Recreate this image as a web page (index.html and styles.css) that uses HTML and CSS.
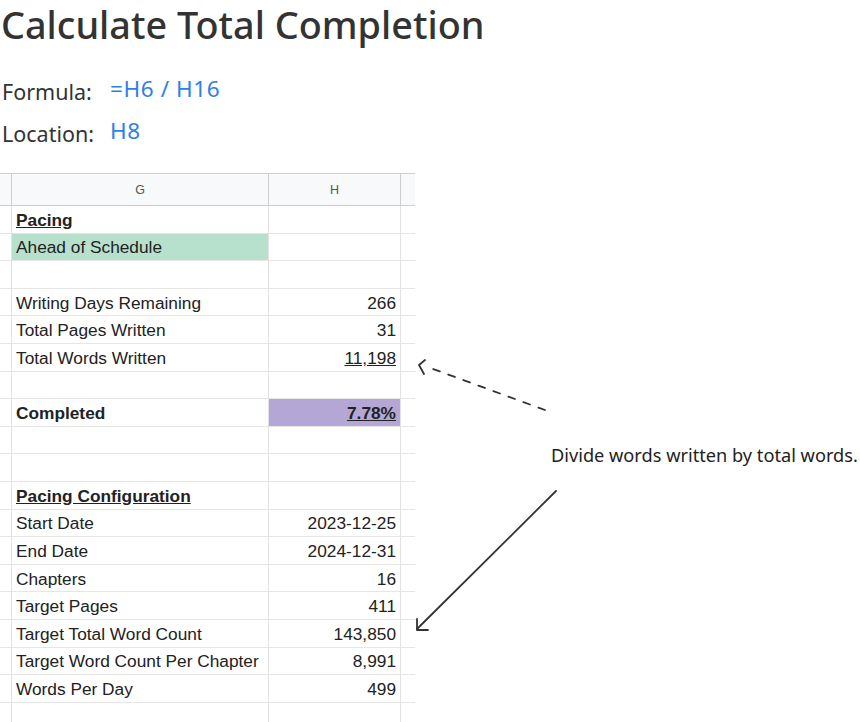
FILE: index.html
```html
<!DOCTYPE html>
<html lang="en">
<head>
<meta charset="utf-8">
<title>Calculate Total Completion</title>
<link rel="stylesheet" href="styles.css">
</head>
<body>
<h1 class="title">Calculate Total Completion</h1>
<div class="meta">
  <span class="meta-label">Formula:</span><span class="meta-value">=H6 / H16</span>
  <span class="meta-label">Location:</span><span class="meta-value">H8</span>
</div>
<div class="workspace">
  <div class="sheet">
    <div class="c hdr edge"></div><div class="c hdr colname">G</div><div class="c hdr colname">H</div><div class="c hdr tail"></div>

    <div class="c edge"></div><div class="c g sec">Pacing</div><div class="c h"></div><div class="c tail"></div>
    <div class="c edge"></div><div class="c g green">Ahead of Schedule</div><div class="c h"></div><div class="c tail"></div>
    <div class="c edge"></div><div class="c g"></div><div class="c h"></div><div class="c tail"></div>
    <div class="c edge"></div><div class="c g">Writing Days Remaining</div><div class="c h">266</div><div class="c tail"></div>
    <div class="c edge"></div><div class="c g">Total Pages Written</div><div class="c h">31</div><div class="c tail"></div>
    <div class="c edge"></div><div class="c g">Total Words Written</div><div class="c h"><span class="ul">11,198</span></div><div class="c tail"></div>
    <div class="c edge"></div><div class="c g"></div><div class="c h"></div><div class="c tail"></div>
    <div class="c edge"></div><div class="c g bold">Completed</div><div class="c h purple bold"><span class="ul">7.78%</span></div><div class="c tail"></div>
    <div class="c edge"></div><div class="c g"></div><div class="c h"></div><div class="c tail"></div>
    <div class="c edge"></div><div class="c g"></div><div class="c h"></div><div class="c tail"></div>
    <div class="c edge"></div><div class="c g sec">Pacing Configuration</div><div class="c h"></div><div class="c tail"></div>
    <div class="c edge"></div><div class="c g">Start Date</div><div class="c h">2023-12-25</div><div class="c tail"></div>
    <div class="c edge"></div><div class="c g">End Date</div><div class="c h">2024-12-31</div><div class="c tail"></div>
    <div class="c edge"></div><div class="c g">Chapters</div><div class="c h">16</div><div class="c tail"></div>
    <div class="c edge"></div><div class="c g">Target Pages</div><div class="c h">411</div><div class="c tail"></div>
    <div class="c edge"></div><div class="c g">Target Total Word Count</div><div class="c h">143,850</div><div class="c tail"></div>
    <div class="c edge"></div><div class="c g">Target Word Count Per Chapter</div><div class="c h">8,991</div><div class="c tail"></div>
    <div class="c edge"></div><div class="c g">Words Per Day</div><div class="c h">499</div><div class="c tail"></div>
    <div class="c edge"></div><div class="c g"></div><div class="c h"></div><div class="c tail"></div>
  </div>
  <p class="note">Divide words written by total words.</p>
</div>
<svg class="arrows" width="860" height="722" viewBox="0 0 860 722" aria-hidden="true">
  <g fill="none" stroke="#333" stroke-width="1.8" stroke-linecap="round" stroke-linejoin="round">
    <path d="M545 410 L425 366" stroke-dasharray="7 9"/>
    <path d="M425 360 L419 365 L424 374"/>
    <path d="M556 491 L417 629"/>
    <path d="M417 619 L417 630 L428 630"/>
  </g>
</svg>
</body>
</html>
```
FILE: styles.css
```css
html, body {
  margin: 0;
  padding: 0;
  background: #ffffff;
}
body {
  position: relative;
  width: 860px;
  min-height: 722px;
  font-family: "Noto Sans", "DejaVu Sans", sans-serif;
  color: #333333;
}
.title {
  margin: 0;
  padding: 2px 0 0 1px;
  font-size: 37.8px;
  font-weight: 500;
  line-height: 46px;
  color: #333333;
  white-space: nowrap;
}
.meta {
  display: grid;
  grid-template-columns: 108px auto;
  grid-auto-rows: 42px;
  margin-top: 27px;
  align-items: start;
  padding-left: 2px;
}
.meta-label {
  font-size: 21.5px;
  line-height: 28px;
  padding-top: 3px;
}
.meta-value {
  font-size: 22.5px;
  line-height: 28px;
  letter-spacing: 0.6px;
  color: #2f7fe6;
}
.workspace {
  display: flex;
  margin-top: 14px;
}
.sheet {
  display: grid;
  grid-template-columns: 12px 257px 132px 14px;
  grid-template-rows: 32px repeat(19, 27.6px);
  border-top: 1px solid #d0d0d0;
  font-family: "Liberation Sans", Arial, sans-serif;
  font-size: 17.3px;
  color: #222222;
  flex: none;
}
.c {
  box-sizing: border-box;
  border-bottom: 1px solid #e6e6e6;
  border-right: 1px solid #e2e2e2;
  white-space: nowrap;
  overflow: hidden;
  display: flex;
  align-items: center;
  padding-top: 2px;
}
.tail {
  border-right: none;
}
.hdr {
  background: #f8f9fa;
  border-bottom: 1px solid #cfcfcf;
  border-right: 1px solid #cfcfcf;
  padding-top: 0;
}
.hdr.tail {
  border-right: none;
}
.colname {
  justify-content: center;
  font-size: 12.5px;
  color: #555555;
}
.g {
  padding-left: 4px;
}
.h {
  justify-content: flex-end;
  padding-right: 4px;
}
.sec {
  font-weight: bold;
  text-decoration: underline;
}
.bold {
  font-weight: bold;
}
.ul {
  text-decoration: underline;
}
.green {
  background: #b7e1cd;
}
.purple {
  background: #b4a7d6;
}
.note {
  margin: 270px 0 0 136px;
  font-size: 18.2px;
  line-height: 24px;
  color: #222222;
  white-space: nowrap;
}
.arrows {
  position: absolute;
  left: 0;
  top: 0;
  pointer-events: none;
}
```
